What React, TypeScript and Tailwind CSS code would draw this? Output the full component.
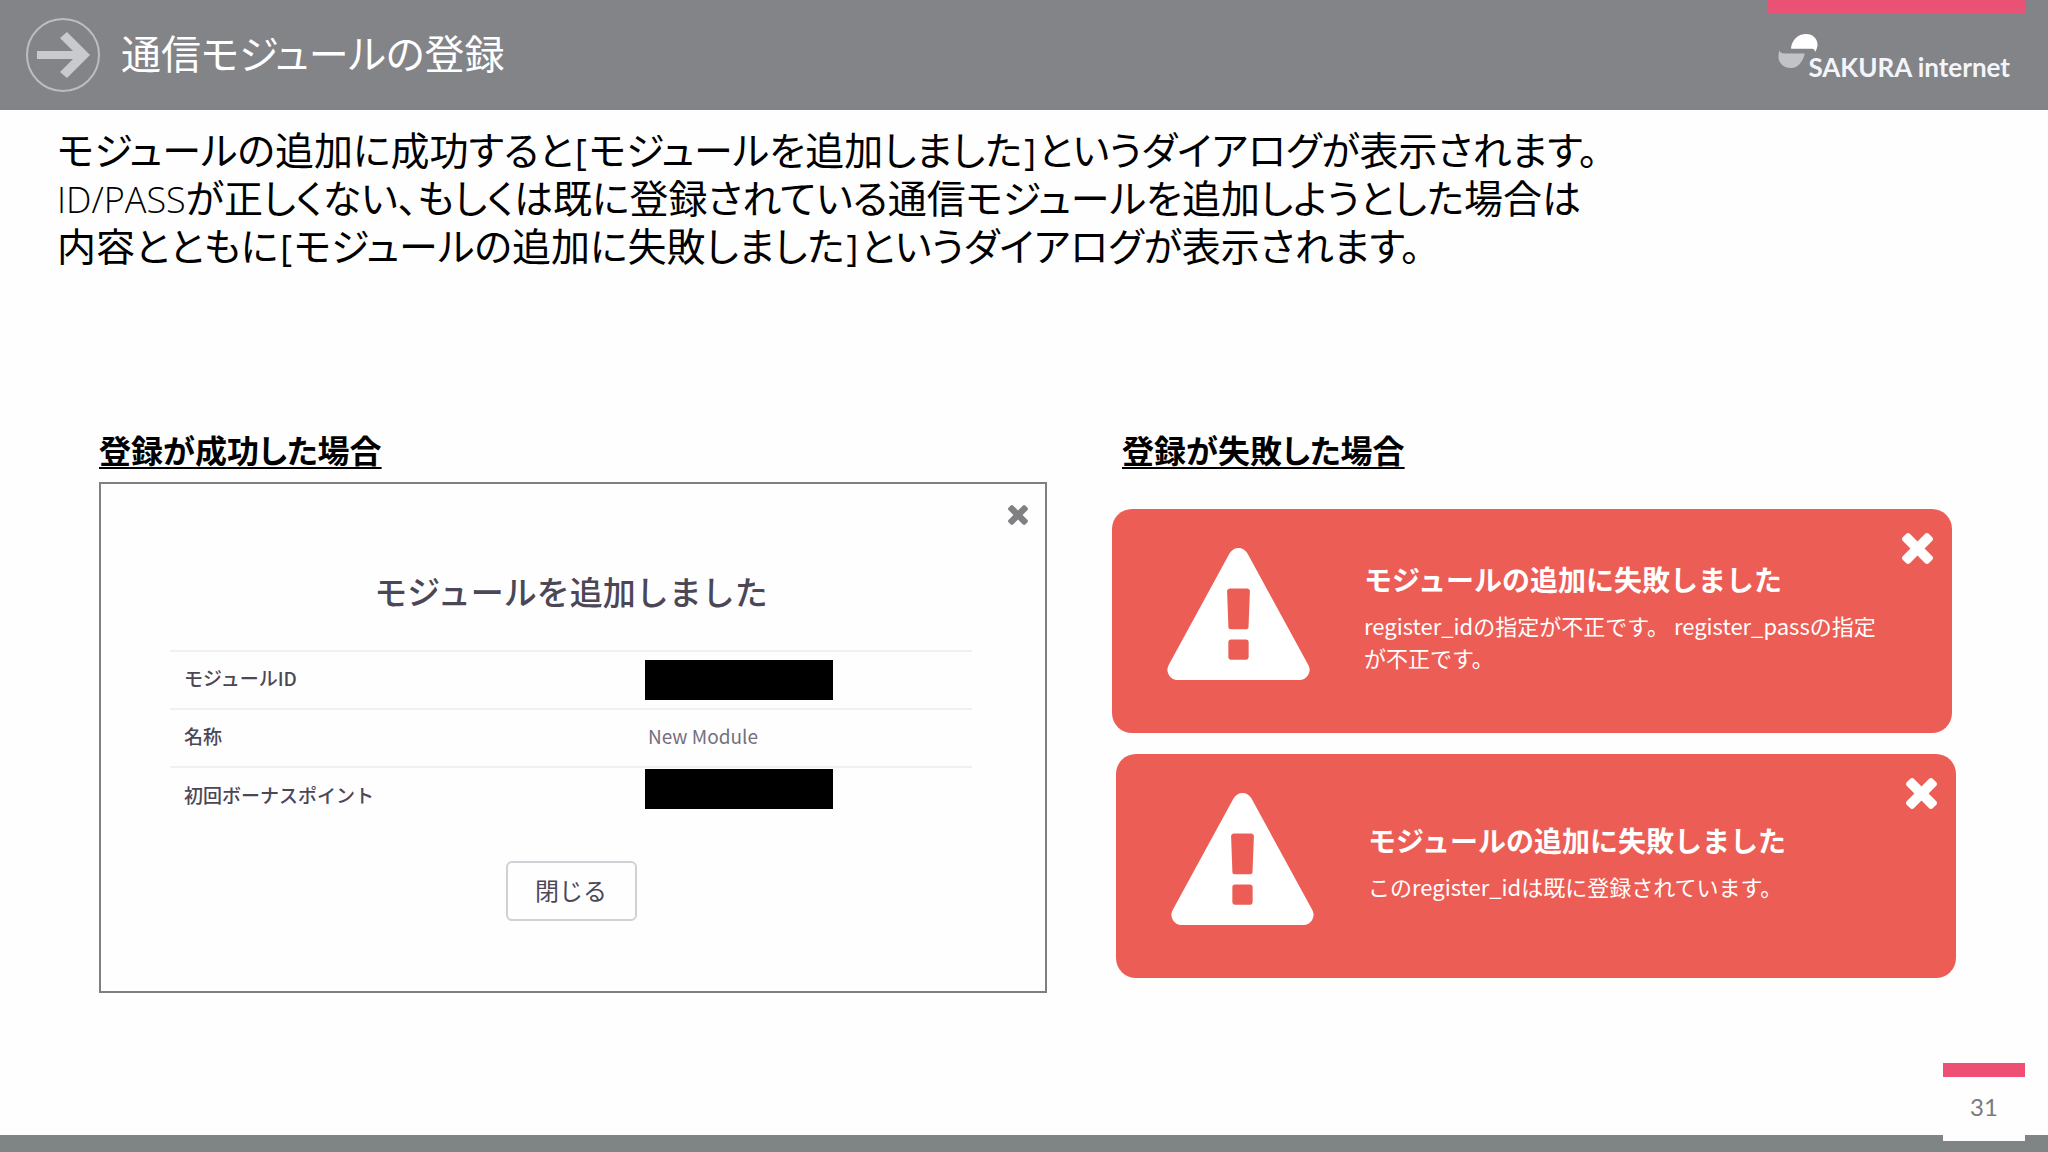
import type { ReactNode } from "react";

const moduleRows = [
  { label: "モジュールID", value: null, cell: "align-middle" },
  { label: "名称", value: "New Module", cell: "align-middle pb-1" },
  { label: "初回ボーナスポイント", value: null, cell: "align-top pt-px" },
];

const failures = [
  {
    title: "モジュールの追加に失敗しました",
    message: "register_idの指定が不正です。 register_passの指定が不正です。",
    offset: "mr-1",
  },
  {
    title: "モジュールの追加に失敗しました",
    message: "このregister_idは既に登録されています。",
    offset: "ml-1",
  },
];

function ArrowBadge() {
  return (
    <svg className="size-[76px] shrink-0" viewBox="0 0 76 76" fill="none" aria-hidden="true">
      <circle cx="38" cy="38" r="36" stroke="#bcbdc1" strokeWidth="2" />
      <path d="M12 34h36L35 21l7-6 23 23-23 23-7-6 13-13H12z" fill="#c9cacd" />
    </svg>
  );
}

function SakuraMark() {
  return (
    <svg className="h-9 w-10 shrink-0" viewBox="0 0 40 36" aria-hidden="true">
      <path d="M13 15C14 7 20 1 28 1c7 0 11.500 5 11.500 10.500 0 2.500-.8 5-2.500 7.500-.3-2.200-1-3.200-3-3.200H14c-.8 0-1-.2-1-.8z" fill="#fff" />
      <path d="M1.500 17.500c1 2.300 2 3 4.500 3h20c.8 0 .9.300.6 1C24.500 29 20 35 13 35 5.500 35 .5 30 .5 24c0-2.500.2-4.500 1-6.500z" fill="#c2c3c6" />
    </svg>
  );
}

function CloseIcon({ className }: { className: string }) {
  return (
    <svg className={className} viewBox="302 366 1188 1188" fill="currentColor" aria-hidden="true">
      <path d="M1490 1322q0 40-28 68l-136 136q-28 28-68 28t-68-28l-294-294-294 294q-28 28-68 28t-68-28l-136-136q-28-28-28-68t28-68l294-294-294-294q-28-28-28-68t28-68l136-136q28-28 68-28t68 28l294 294 294-294q28-28 68-28t68 28l136 136q28 28 28 68t-28 68l-294 294 294 294q28 28 28 68z" />
    </svg>
  );
}

function WarningIcon() {
  return (
    <svg className="mt-[39px] h-[132px] w-[143px] shrink-0 self-start" viewBox="0 0 1792 1664" fill="currentColor" aria-hidden="true">
      <path d="M1024 1375v-190q0-14-9.500-23.500t-22.500-9.500h-192q-13 0-22.500 9.500t-9.500 23.500v190q0 14 9.500 23.500t22.500 9.500h192q13 0 22.500-9.500t9.500-23.500zm-2-374l18-459q0-12-10-19-13-11-24-11h-220q-11 0-24 11-10 7-10 21l17 457q0 10 10 16.500t24 6.500h185q14 0 23.500-6.500t10.500-16.500zm-14-934l768 1408q35 63-2 126-17 29-46.500 46t-63.500 17h-1536q-34 0-63.500-17t-46.500-46q-37-63-2-126l768-1408q17-31 47-49t65-18 65 18 47 49z" />
    </svg>
  );
}

function Bracket({ children }: { children: ReactNode }) {
  return <span className="px-[2px] font-['Open_Sans'] text-[36px] leading-none font-normal">{children}</span>;
}

function SuccessDialog() {
  return (
    <div className="relative flex h-[511px] flex-col items-center border-2 border-[#7f7f82] pt-[83px] pr-[73px] pl-[69px] text-[#4b4757]">
      <button type="button" aria-label="閉じる" className="absolute top-[21px] right-[17px] text-[#808083]">
        <CloseIcon className="size-5" />
      </button>
      <h3 className="text-[33px] leading-[48px] font-medium">モジュールを追加しました</h3>
      <table className="mt-[35px] w-full table-fixed border-collapse">
        <tbody>
          {moduleRows.map((row) => (
            <tr key={row.label} className="h-[58px] border-t-2 border-[#f1eff4]">
              <th scope="row" className="w-[475px] pb-1 pl-[14px] text-left text-[19px] leading-6 font-medium">
                {row.label}
              </th>
              <td className={row.cell}>
                {row.value ? (
                  <span className="pl-[3px] text-[19px] leading-6 text-[#74707f]">{row.value}</span>
                ) : (
                  <div className="h-10 w-[188px] bg-black" />
                )}
              </td>
            </tr>
          ))}
        </tbody>
      </table>
      <button type="button" className="mt-9 h-[60px] w-[131px] rounded-md border-2 border-[#d2cfd6] pb-0.5 text-[24px] leading-8 text-[#4b4757]">
        閉じる
      </button>
    </div>
  );
}

function FailureAlert({ title, message, offset }: { title: string; message: string; offset: string }) {
  return (
    <div role="alert" className={`relative flex h-56 items-center gap-[54px] rounded-[20px] bg-[#ec5e55] pr-[60px] pl-[55px] text-white ${offset}`}>
      <WarningIcon />
      <div className="pb-2.5">
        <h3 className="text-[28px] leading-10 font-bold">{title}</h3>
        <p className="mt-2.5 text-[22px] leading-8">{message}</p>
      </div>
      <button type="button" aria-label="閉じる" className="absolute top-6 right-[19px]">
        <CloseIcon className="size-[31px]" />
      </button>
    </div>
  );
}

export default function App() {
  return (
    <div className="flex min-h-screen flex-col bg-[#fefefe] font-['Noto_Sans_CJK_JP',sans-serif] text-black">
      <header className="relative flex h-[110px] items-center justify-between bg-[#838488] pr-[38px] pl-[25px] text-white">
        <div className="absolute top-0 right-[22px] h-[14px] w-[259px] bg-[#e95275]" />
        <div className="flex items-center gap-5">
          <ArrowBadge />
          <h1 className="pb-1.5 text-[40px] leading-[56px] [font-feature-settings:'palt']">通信モジュールの登録</h1>
        </div>
        <div className="flex items-start pt-1.5">
          <SakuraMark />
          <span className="-ml-[10px] pt-[18px] font-['Lato'] text-[26px] leading-8 font-bold text-[#f4f5fa]">
            SAKURA internet
          </span>
        </div>
      </header>

      <main className="flex-1">
        <p className="px-[57px] pt-[14px] text-[39px] leading-[48px] [font-feature-settings:'palt']">
          モジュールの追加に成功すると<Bracket>[</Bracket>モジュールを追加しました<Bracket>]</Bracket>というダイアログが表示されます。
          <br />
          <span className="font-['Open_Sans'] text-[36px] leading-none font-light">ID/PASS</span>
          が正しくない、もしくは既に登録されている通信モジュールを追加しようとした場合は
          <br />
          内容とともに<Bracket>[</Bracket>モジュールの追加に失敗しました<Bracket>]</Bracket>というダイアログが表示されます。
        </p>

        <div className="mt-[161px] grid grid-cols-[948fr_844fr] gap-[65px] pr-[92px] pl-[99px]">
          <section>
            <h2 className="mb-[13px] text-[32px] leading-10 font-bold underline decoration-2 underline-offset-[4px] [font-feature-settings:'palt']">
              登録が成功した場合
            </h2>
            <SuccessDialog />
          </section>
          <section>
            <h2 className="mb-10 pl-[10px] text-[32px] leading-10 font-bold underline decoration-2 underline-offset-[4px] [font-feature-settings:'palt']">
              登録が失敗した場合
            </h2>
            <div className="flex flex-col gap-[21px]">
              {failures.map((failure) => (
                <FailureAlert key={failure.message} {...failure} />
              ))}
            </div>
          </section>
        </div>
      </main>

      <footer className="relative h-[17px] bg-[#7f8485]">
        <div className="absolute right-[23px] bottom-[11px] flex h-[78px] w-[82px] flex-col items-center border-t-[14px] border-[#ee5073] bg-[#fefefe] pt-[14px] font-['Lato'] text-[24px] leading-8 text-[#7b7b7d]">
          31
        </div>
      </footer>
    </div>
  );
}
